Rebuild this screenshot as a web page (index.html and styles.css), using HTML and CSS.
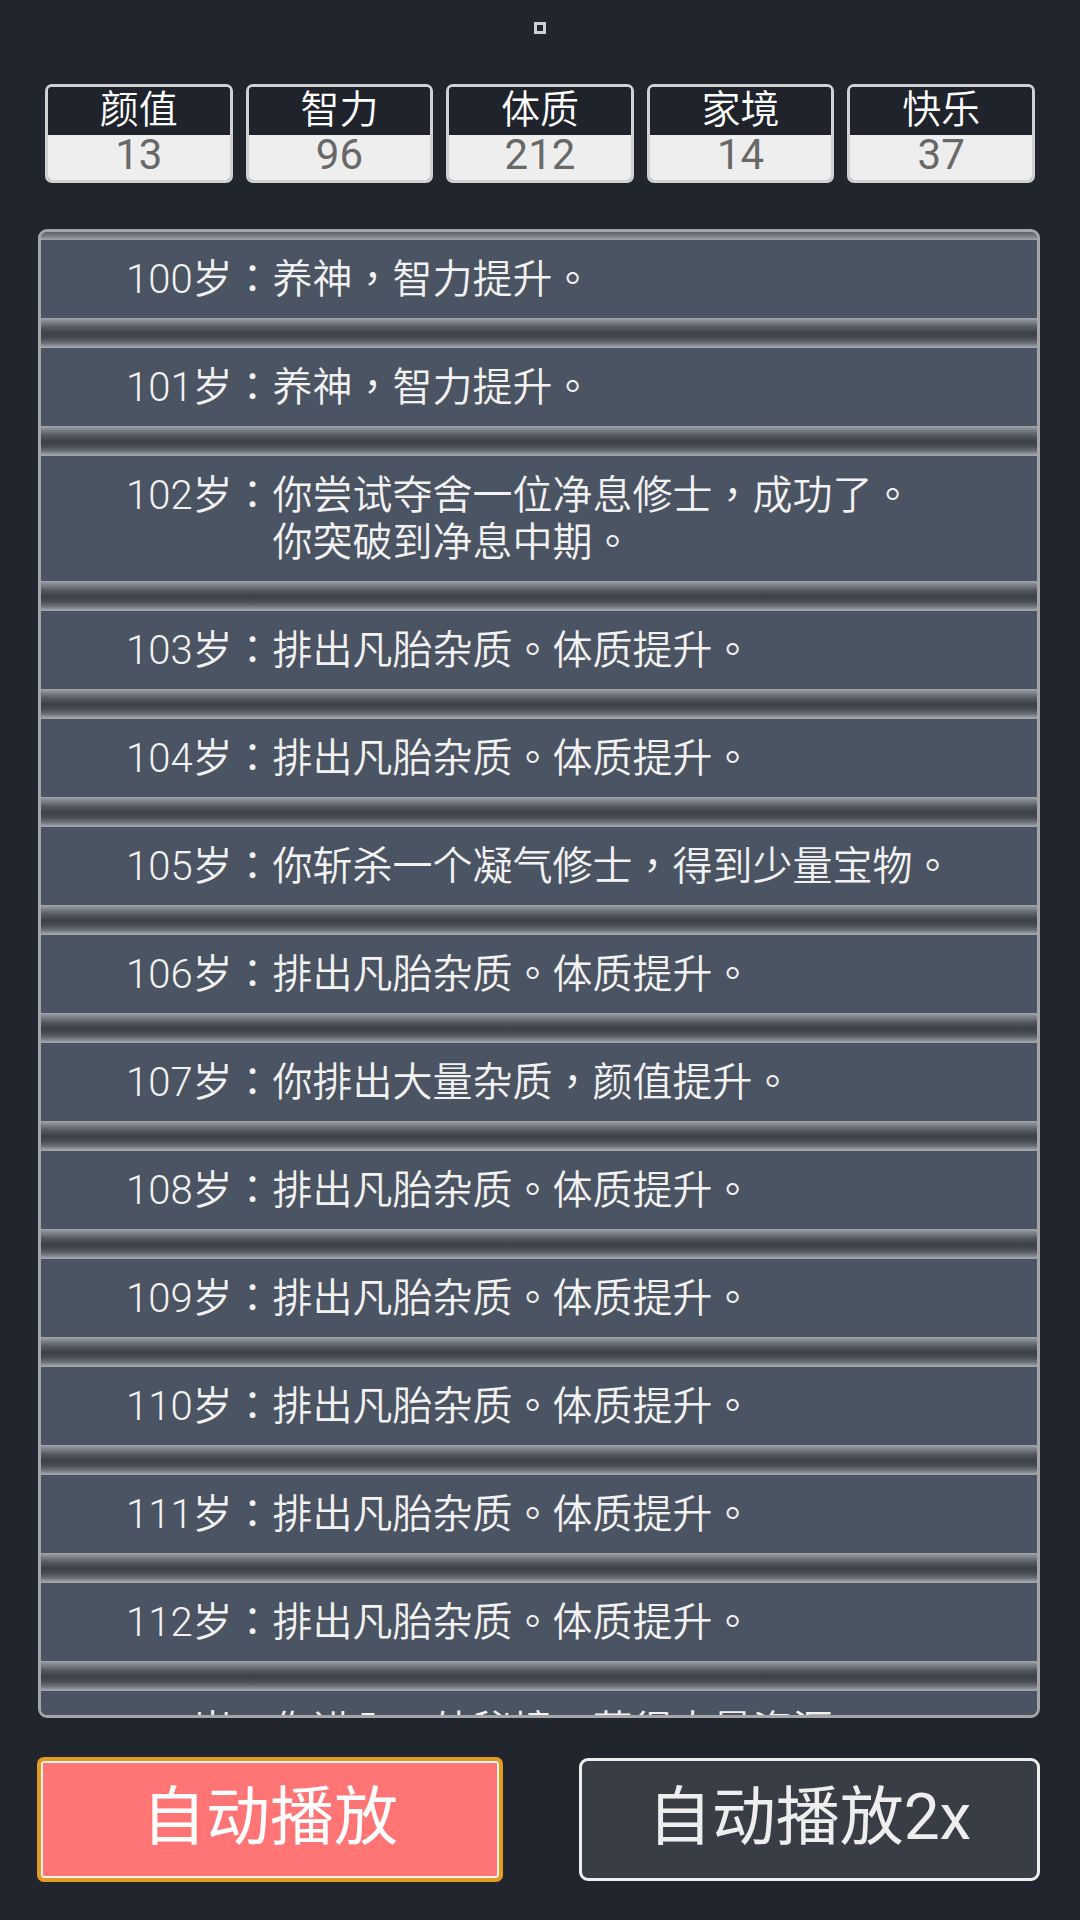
FILE: index.html
```html
<!DOCTYPE html>
<html lang="zh-TW">
<head>
<meta charset="utf-8">
<title>人生重开</title>
<link rel="stylesheet" href="styles.css">
</head>
<body>
<div class="app">
  <div class="topbar"><span class="dot"></span></div>

  <div class="stats">
    <div class="stat"><div class="stat-name">颜值</div><div class="stat-val">13</div></div>
    <div class="stat"><div class="stat-name">智力</div><div class="stat-val">96</div></div>
    <div class="stat"><div class="stat-name">体质</div><div class="stat-val">212</div></div>
    <div class="stat"><div class="stat-name">家境</div><div class="stat-val">14</div></div>
    <div class="stat"><div class="stat-name">快乐</div><div class="stat-val">37</div></div>
  </div>

  <div class="log">
    <div class="log-head"></div>
    <div class="row"><span class="age">100岁：</span><span class="msg">养神，智力提升。</span></div>
    <div class="sep"></div>
    <div class="row"><span class="age">101岁：</span><span class="msg">养神，智力提升。</span></div>
    <div class="sep"></div>
    <div class="row"><span class="age">102岁：</span><span class="msg">你尝试夺舍一位净息修士，成功了。<br>你突破到净息中期。</span></div>
    <div class="sep"></div>
    <div class="row"><span class="age">103岁：</span><span class="msg">排出凡胎杂质。体质提升。</span></div>
    <div class="sep"></div>
    <div class="row"><span class="age">104岁：</span><span class="msg">排出凡胎杂质。体质提升。</span></div>
    <div class="sep"></div>
    <div class="row"><span class="age">105岁：</span><span class="msg">你斩杀一个凝气修士，得到少量宝物。</span></div>
    <div class="sep"></div>
    <div class="row"><span class="age">106岁：</span><span class="msg">排出凡胎杂质。体质提升。</span></div>
    <div class="sep"></div>
    <div class="row"><span class="age">107岁：</span><span class="msg">你排出大量杂质，颜值提升。</span></div>
    <div class="sep"></div>
    <div class="row"><span class="age">108岁：</span><span class="msg">排出凡胎杂质。体质提升。</span></div>
    <div class="sep"></div>
    <div class="row"><span class="age">109岁：</span><span class="msg">排出凡胎杂质。体质提升。</span></div>
    <div class="sep"></div>
    <div class="row"><span class="age">110岁：</span><span class="msg">排出凡胎杂质。体质提升。</span></div>
    <div class="sep"></div>
    <div class="row"><span class="age">111岁：</span><span class="msg">排出凡胎杂质。体质提升。</span></div>
    <div class="sep"></div>
    <div class="row"><span class="age">112岁：</span><span class="msg">排出凡胎杂质。体质提升。</span></div>
    <div class="sep"></div>
    <div class="row"><span class="age">113岁：</span><span class="msg">你进入一处秘境，获得大量资源。</span></div>
    <div class="sep"></div>
  </div>

  <div class="controls">
    <button class="btn btn-auto">自动播放</button>
    <button class="btn btn-fast">自动播放2x</button>
  </div>
</div>
</body>
</html>
```

FILE: styles.css
```css
* { box-sizing: border-box; }

html, body {
  margin: 0;
  padding: 0;
  background: #21252e;
}

body {
  width: 1080px;
  height: 1920px;
  overflow: hidden;
  font-family: "Roboto", "Noto Sans CJK TC", "Noto Sans CJK SC", sans-serif;
  color: #f2f2f2;
}

.app {
  display: flex;
  flex-direction: column;
  height: 1920px;
}

.topbar {
  display: flex;
  justify-content: center;
  padding-top: 22px;
  height: 34px;
}

.dot {
  display: block;
  width: 12px;
  height: 12px;
  border: 3.5px solid #cdcfd2;
  background: #21252e;
}

.stats {
  display: grid;
  grid-template-columns: repeat(5, 1fr);
  gap: 13px;
  padding: 0 45px;
  margin-top: 50px;
}

.stat {
  border: 3px solid #d0d1d3;
  border-radius: 7px;
  overflow: hidden;
  display: flex;
  flex-direction: column;
  height: 99px;
}

.stat-name {
  height: 48px;
  background: #1f232b;
  color: #ffffff;
  font-size: 39px;
  font-weight: 350;
  line-height: 46px;
  text-align: center;
}

.stat-val {
  flex: 1;
  background: #eeeeee;
  color: #686868;
  font-size: 42px;
  font-weight: 400;
  line-height: 40px;
  text-align: center;
}

.log {
  margin: 46px 40px 0 38px;
  height: 1489px;
  border: 3px solid #a3a5a8;
  border-radius: 9px;
  background: #4b5462;
  overflow: hidden;
}

.log-head {
  height: 8px;
  background: linear-gradient(to bottom, #5d6169 0%, #7f838a 60%, #a2a6ac 100%);
}

.row {
  display: flex;
  background: #4b5462;
  padding: 15.5px 20px 15.5px 85px;
  font-family: "Roboto", "Noto Sans CJK TC", "Noto Sans CJK SC", sans-serif;
  font-size: 40px;
  font-weight: 350;
  line-height: 47px;
  color: #f2f2f2;
}

.age {
  flex: none;
}

.msg {
  flex: 1;
}

.sep {
  height: 30px;
  background: linear-gradient(to bottom,
    #a4a8ae 0px,
    #858990 3px,
    #575b63 9px,
    #3d4149 15px,
    #464a52 20px,
    #6a6e76 25px,
    #a0a4aa 29px,
    #a4a8ae 30px);
}

.controls {
  display: flex;
  justify-content: space-between;
  align-items: flex-start;
  padding: 0 40px 0 37px;
  margin-top: 39px;
}

.btn {
  font-family: "Roboto", "Noto Sans CJK TC", "Noto Sans CJK SC", sans-serif;
  font-size: 64px;
  font-weight: 400;
  line-height: 1;
  padding: 0 0 4px;
  margin: 0;
  display: flex;
  align-items: center;
  justify-content: center;
  cursor: pointer;
}

.btn-auto {
  width: 466px;
  height: 125px;
  border: 4px solid #e29c22;
  border-radius: 7px;
  background: #ff7575;
  box-shadow: inset 0 0 0 2px #fff4ee;
  color: #ffffff;
}

.btn-fast {
  width: 461px;
  height: 123px;
  margin-top: 1px;
  border: 3px solid #eeeeee;
  border-radius: 9px;
  background: #393e46;
  color: #eeeeee;
}
```
